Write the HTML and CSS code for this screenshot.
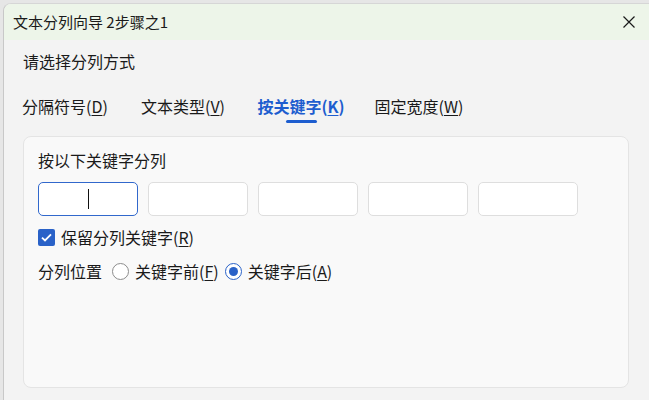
FILE: index.html
```html
<!DOCTYPE html>
<html lang="zh-CN">
<head>
    <meta charset="UTF-8">
    <meta name="viewport" content="width=device-width, initial-scale=1.0">
    <title>文本分列向导</title>
    <link rel="stylesheet" href="styles.css">
</head>
<body>
    <div class="desk">
        <div class="dialog">
            <div class="titlebar">
                <span class="title">文本分列向导 2步骤之1</span>
                <svg class="close" width="12" height="12" viewBox="0 0 12 12">
                    <path d="M0.5 0.5 L11.5 11.5 M11.5 0.5 L0.5 11.5" stroke="#1a1a1a" stroke-width="1.2" fill="none"/>
                </svg>
            </div>

            <div class="prompt">请选择分列方式</div>

            <div class="tabs">
                <div class="tab"><span>分隔符号(<u>D</u>)</span></div>
                <div class="tab"><span>文本类型(<u>V</u>)</span></div>
                <div class="tab active"><span>按关键字(<u>K</u>)</span><span class="indicator"></span></div>
                <div class="tab"><span>固定宽度(<u>W</u>)</span></div>
            </div>

            <div class="panel">
                <div class="label">按以下关键字分列</div>
                <div class="keys">
                    <div class="key focused"><span class="caret"></span></div>
                    <div class="key"></div>
                    <div class="key"></div>
                    <div class="key"></div>
                    <div class="key"></div>
                </div>
                <div class="check-row">
                    <span class="checkbox">
                        <svg width="11" height="9" viewBox="0 0 11 9">
                            <path d="M1 4.6 L4 7.5 L10 1.3" stroke="#fff" stroke-width="1.8" fill="none"/>
                        </svg>
                    </span>
                    <span>保留分列关键字(<u>R</u>)</span>
                </div>
                <div class="radio-row">
                    <span class="radio-title">分列位置</span>
                    <span class="radio"></span>
                    <span>关键字前(<u>F</u>)</span>
                    <span class="radio on"></span>
                    <span>关键字后(<u>A</u>)</span>
                </div>
            </div>
        </div>
    </div>
</body>
</html>
```

FILE: styles.css
```css
body {
    margin: 0;
    background: #e6e6e6;
    font-family: "Noto Sans CJK SC", sans-serif;
    color: #1a1a1a;
    overflow: hidden;
}

u {
    text-decoration-thickness: 1px;
    text-underline-offset: 2px;
}

.desk {
    height: 400px;
    padding: 3px 0 0 3px;
    box-sizing: border-box;
}

.dialog {
    width: 646px;
    height: 397px;
    background: #f3f3f3;
    border-left: 1px solid #c8c8c8;
    border-top: 1px solid #d6d6d6;
    border-radius: 8px 0 0 0;
    box-sizing: border-box;
    overflow: hidden;
}

.titlebar {
    height: 36px;
    background: #edf5e9;
    display: flex;
    align-items: center;
    justify-content: space-between;
    padding: 0 14px 0 9px;
}

.title {
    font-size: 15px;
    line-height: 20px;
}

.prompt {
    margin: 9px 0 0 19px;
    font-size: 16px;
    line-height: 24px;
}

.tabs {
    display: flex;
    margin: 21px 0 0 2px;
}

.tab {
    width: 118px;
    display: flex;
    flex-direction: column;
    align-items: center;
    font-size: 16px;
    line-height: 24px;
    height: 29px;
    white-space: nowrap;
}

.tab.active {
    color: #1d5dcf;
    font-weight: bold;
}

.indicator {
    width: 31px;
    height: 3px;
    margin-top: 2px;
    border-radius: 2px;
    background: #1d5dcf;
}

.panel {
    margin: 13px 0 0 19px;
    width: 606px;
    height: 252px;
    box-sizing: border-box;
    background: #f9f9f9;
    border: 1px solid #e4e4e4;
    border-radius: 8px;
    padding: 11px 0 0 14px;
    font-size: 16px;
    line-height: 24px;
}

.keys {
    display: flex;
    gap: 10px;
    margin-top: 10px;
}

.key {
    width: 100px;
    height: 34px;
    box-sizing: border-box;
    background: #fff;
    border: 1px solid #dedede;
    border-radius: 5px;
    display: flex;
    align-items: center;
    justify-content: center;
}

.key.focused {
    border: 1.5px solid #3168cc;
}

.caret {
    width: 1px;
    height: 20px;
    background: #111;
}

.check-row {
    display: flex;
    align-items: center;
    gap: 6px;
    margin-top: 9px;
}

.checkbox {
    width: 17px;
    height: 17px;
    border-radius: 2px;
    background: #2a62c8;
    display: flex;
    align-items: center;
    justify-content: center;
}

.radio-row {
    display: flex;
    align-items: center;
    margin-top: 10px;
}

.radio-title {
    margin-right: 10px;
}

.radio {
    width: 17px;
    height: 17px;
    box-sizing: border-box;
    border: 1px solid #8c8c8c;
    border-radius: 50%;
    background: #fff;
    margin-right: 6px;
}

.radio.on {
    border: 1.5px solid #2a62c8;
    margin-left: 6px;
    display: flex;
    align-items: center;
    justify-content: center;
}

.radio.on::after {
    content: "";
    width: 9px;
    height: 9px;
    border-radius: 50%;
    background: #2a62c8;
}
```
